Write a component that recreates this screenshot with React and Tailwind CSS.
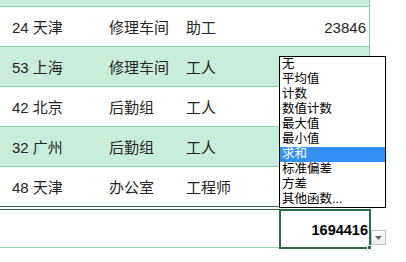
import React from "react";

const rows = [
  { a: "24 天津", b: "修理车间", c: "助工", d: "23846", green: false },
  { a: "53 上海", b: "修理车间", c: "工人", d: "", green: true },
  { a: "42 北京", b: "后勤组", c: "工人", d: "", green: false },
  { a: "32 广州", b: "后勤组", c: "工人", d: "", green: true },
  { a: "48 天津", b: "办公室", c: "工程师", d: "", green: false, last: true },
];

const items = ["无", "平均值", "计数", "数值计数", "最大值", "最小值", "求和", "标准偏差", "方差", "其他函数..."];

export default function App() {
  return (
    <div
      className="relative w-[406px] h-[262px] overflow-hidden bg-white text-[#262626]"
      style={{ fontFamily: '"Liberation Sans", "Noto Sans CJK SC", sans-serif' }}
    >
      <div className="w-[370px] border-r border-[#8dd1ae]">
        <div className="h-[7px] bg-[#c8eddb] border-b border-[#8dd1ae]" />
        {rows.map((r, i) => (
          <div
            key={i}
            className={`flex items-center h-[40px] pt-[3px] text-[15px] ${r.green ? "bg-[#c8eddb]" : "bg-white"} ${
              r.last ? "border-b border-[#3d6e53]" : "border-b border-[#8dd1ae]"
            }`}
          >
            <div className="w-[109px] pl-[12px]">{r.a}</div>
            <div className="w-[77px]">{r.b}</div>
            <div className="w-[93px]">{r.c}</div>
            <div className="flex-1 text-right pr-[3px]">{r.d}</div>
          </div>
        ))}
      </div>
      <div className="flex w-[371px] mt-[2px]">
        <div className="w-[279px] h-[39px] border-t border-[#3d6e53] border-b border-b-[#8dd1ae]" />
        <div className="w-[92px] h-[40px] border-2 border-[#2e6b4b] flex items-center justify-end pr-[1px] pt-[3px] text-[14.5px] font-bold text-black">
          1694416
        </div>
      </div>

      <div className="absolute left-[367px] top-[245px] w-[5px] h-[5px] bg-[#2e6b4b] border border-white" />

      <div className="absolute left-[371px] top-[230px] w-[15px] h-[15px] border border-[#c4c4c4] bg-gradient-to-b from-white to-[#ececec] flex items-center justify-center">
        <svg width="7" height="4" viewBox="0 0 7 4">
          <path d="M0 0 L7 0 L3.5 4 Z" fill="#6b6b6b" />
        </svg>
      </div>

      <div className="absolute left-[279px] top-[56px] w-[107px] border border-black bg-white text-[12.5px] text-black">
        {items.map((t, i) => (
          <div
            key={i}
            className={`h-[15px] leading-[15px] pl-[2px] ${t === "求和" ? "bg-[#3391f5] text-white" : ""}`}
          >
            {t}
          </div>
        ))}
      </div>
    </div>
  );
}
